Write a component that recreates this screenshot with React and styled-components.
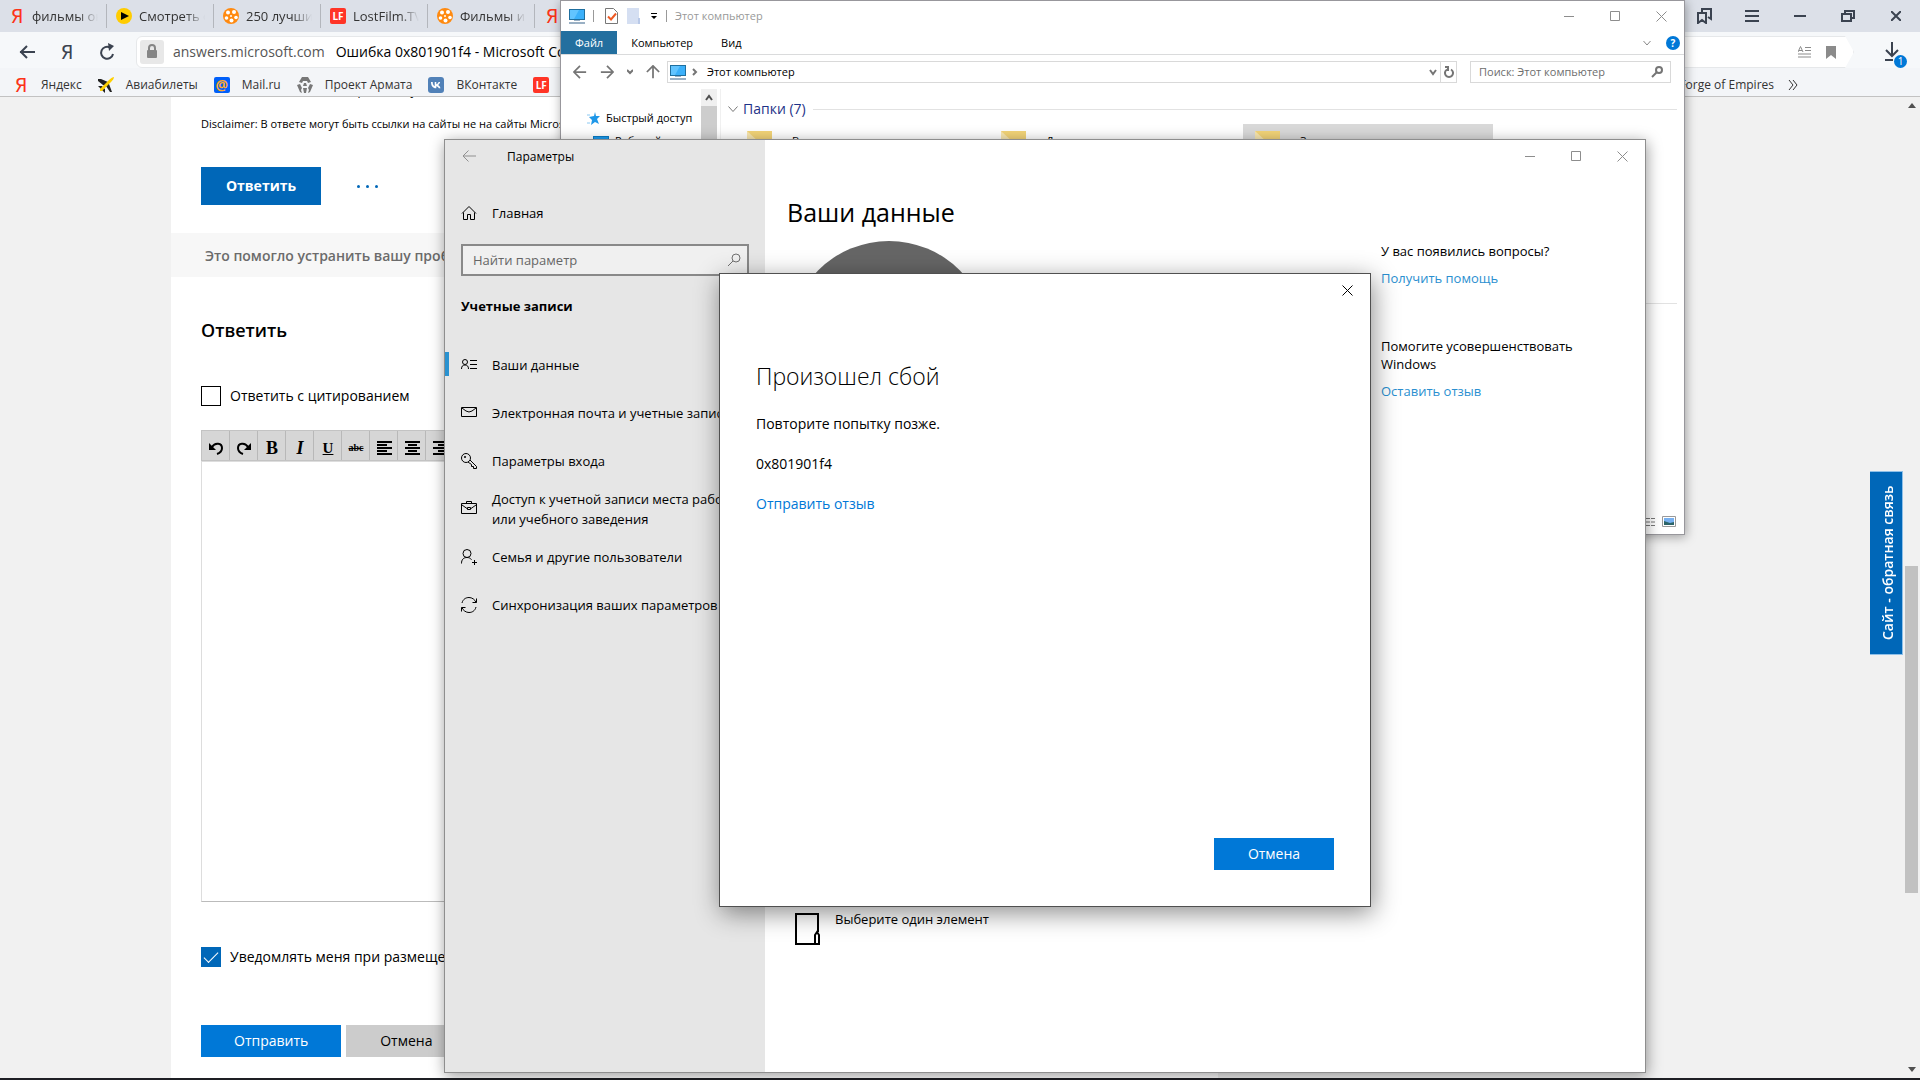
import React from "react";
import styled, { createGlobalStyle, css } from "styled-components";

const GlobalStyle = createGlobalStyle`
  * {
    box-sizing: border-box;
  }
  body {
    margin: 0;
    font-family: "Open Sans", "Noto Sans", sans-serif;
    font-size: 13px;
    line-height: 20px;
    color: #000;
  }
  button, input, textarea {
    font: inherit;
    color: inherit;
    margin: 0;
    padding: 0;
    border: 0;
    border-radius: 0;
    background: none;
    outline: 0;
  }
  p, h1, h2, ul {
    margin: 0;
    padding: 0;
    font-weight: 400;
  }
  a {
    color: inherit;
    text-decoration: none;
  }
  svg {
    display: block;
    flex: none;
  }
`;

const Svg = ({ w = 16, h = 16, children, ...rest }) => (
  <svg width={w} height={h} viewBox={`0 0 ${w} ${h}`} fill="none" stroke="currentColor" aria-hidden="true" {...rest}>
    {children}
  </svg>
);

/* ---------- icons ---------- */

const PlayIcon = () => (
  <Svg stroke="none">
    <circle cx="8" cy="8" r="8" fill="#ffcc00" />
    <path d="M5 4l8 4-8 4z" fill="#000" />
  </Svg>
);

const FilmIcon = () => (
  <Svg stroke="none">
    <circle cx="8" cy="8" r="8" fill="#ff8a10" />
    <g fill="#fff">
      <circle cx="5" cy="4.500" r="2" />
      <circle cx="11" cy="4" r="2" />
      <circle cx="13" cy="9.500" r="1.800" />
      <circle cx="8.500" cy="12.500" r="2" />
      <circle cx="3.500" cy="10" r="1.800" />
      <circle cx="8" cy="8" r="1" />
    </g>
  </Svg>
);

const PlaneIcon = () => (
  <Svg stroke="none">
    <path d="M0 2h3l7 3 1 2 3 8-2 0-4-6-3-1-5-4zM0 9l4 0 3 3 0 4-3-3z" fill="#222" />
    <path d="M16 0c-1 0-3 1-5 3L2 12l0 2 2 0 9-9c2-2 3-4 3-5z" fill="#ffd000" />
  </Svg>
);

const ArmataIcon = () => (
  <Svg stroke="none">
    <path d="M5 0h6l3 5-3 1-1-2H6L5 6 2 5zM0 8l3-1 2 4-1 2 1 3-2-1zM16 8l-3-1-2 4 1 2-1 3 2-1zM7 6h2l1 3H6zM6 11h4l-1 5H7z" fill="#777" />
  </Svg>
);

const VkIcon = () => (
  <Svg stroke="none">
    <rect width="16" height="16" rx="3" fill="#5181b8" />
    <path
      d="M8 11.3C4.800 11.300 3 8.800 3 5h1.700c0 2.500 1 3.800 2 4V5h1.600v2.300c1-.1 1.800-1 2.200-2.300h1.600c-.2 1.300-1.200 2.500-2 3 .8.400 1.900 1.500 2.400 3.300h-1.700c-.400-1.200-1.300-2-2.500-2.100v2.100z"
      fill="#fff"
    />
  </Svg>
);

const LockIcon = () => (
  <Svg w={12} h={16} stroke="none">
    <rect x="1" y="6" width="10" height="8" rx="1" fill="#858585" />
    <path d="M3 7V4a3 3 0 016 0v3" fill="none" stroke="#858585" strokeWidth="2" />
  </Svg>
);

const BackIcon = () => (
  <Svg strokeWidth="2">
    <path d="M16 8H1M8 2L2 8l6 6" />
  </Svg>
);

const ReloadIcon = () => (
  <Svg w={18} h={18} strokeWidth="2">
    <path d="M12 4.500A6 6 0 1015 11" />
    <path d="M10 0l6 3-5 5z" fill="currentColor" stroke="none" />
  </Svg>
);

const DownloadIcon = () => (
  <Svg w={18} h={20} strokeWidth="2">
    <path d="M9 0v13M3 8l6 6 6-6M2 18h8" />
  </Svg>
);

const ReaderIcon = () => (
  <Svg w={14} h={12}>
    <path d="M0 6L2.500 .5 5 6M1 4.500h3M7 1.500h6M7 4.500h6M0 8h13M0 11h13" />
  </Svg>
);

const RibbonIcon = () => (
  <Svg w={10} h={13} stroke="none">
    <path d="M0 0h10v13l-5-4-5 4z" fill="#8b8b8b" />
  </Svg>
);

const PcIcon = () => (
  <Svg stroke="none">
    <rect x="0" y="1" width="16" height="11" fill="#1f6f9f" />
    <rect x="1" y="2" width="14" height="9" fill="#3bb0fa" />
    <path d="M1 2h9L5 11H1z" fill="#62c4ff" />
    <path d="M5 12h6v1H5zM0 14h16v2H0z" fill="#9ab0c4" />
  </Svg>
);

const CheckDocIcon = () => (
  <Svg w={13} h={16}>
    <path d="M.5.5h8l4 4v11H.5z" stroke="#777" fill="#fff" />
    <path d="M3 8.500l3 3 5-6" stroke="#ee5a24" strokeWidth="2" />
  </Svg>
);

const BlueDocIcon = () => (
  <Svg w={13} h={16} stroke="none">
    <path d="M0 0h12v16H0z" fill="#d5dff2" />
    <path d="M11 10h2v6h-2z" fill="#b9c9e8" />
  </Svg>
);

const Chevron = ({ up }) => (
  <Svg w={8} h={8} strokeWidth="2">
    <path d={up ? "M1 6l3-4 3 4" : "M1 2l3 4 3-4"} />
  </Svg>
);

const SearchIcon = ({ size = 14 }) => (
  <svg width={size} height={size} viewBox="0 0 14 14" fill="none" stroke="currentColor" aria-hidden="true">
    <circle cx="9" cy="5" r="4" />
    <path d="M6 8l-5 5" />
  </svg>
);

const StarIcon = () => (
  <Svg w={13} h={13} stroke="none">
    <path d="M8 0l1 4 4 0-3 3 2 5-4-2-4 3 1-5-3-3 5-1z" fill="#1e97e8" />
    <path d="M0 3h3M0 11h3" stroke="#8ac8f2" />
  </Svg>
);

const FolderIcon = () => (
  <Svg w={25} h={22} stroke="none">
    <path d="M0 0h25v22H0z" fill="#f3d478" />
    <path d="M0 0l13 12v10H0z" fill="#f9e7b0" />
  </Svg>
);

const HomeIcon = () => (
  <Svg>
    <path d="M1 8.500L8 1.500l7 7M2.500 7.500v7h4v-5h3v5h4v-7" />
  </Svg>
);

const UserCardIcon = () => (
  <Svg>
    <circle cx="4" cy="5" r="2.500" />
    <path d="M.5 12C.5 9 2 8 4 8s3.500 1 3.500 4M9 3.500h7M9 7.500h7M9 11.500h7" />
  </Svg>
);

const MailIcon = () => (
  <Svg>
    <path d="M.5 2.500h15v9H.5zM1 3l4 3 3 1 3-1 4-3" />
  </Svg>
);

const KeyIcon = () => (
  <Svg>
    <circle cx="5" cy="5" r="4.500" />
    <circle cx="4" cy="4" r=".7" />
    <path d="M9 7l6.500 6.500v2h-3v-2h-2v-2L7 9" />
  </Svg>
);

const CaseIcon = () => (
  <Svg>
    <path d="M.5 2.500h15v10H.5zM5.500 2V.5h5V2M1 4l5 3.500M15 4l-5 3.500M6.500 6.500h3v2h-3z" />
  </Svg>
);

const AddUserIcon = () => (
  <Svg>
    <circle cx="6" cy="4.500" r="4" />
    <path d="M.5 14.500c0-4 2-6 5.500-6 2 0 3.500.8 4.500 2.200M11 13.500h5M13.500 11v5" />
  </Svg>
);

const SyncIcon = () => (
  <Svg>
    <path d="M1 6C2 2 5 .5 8 .5s6 2 7 5M15.500 1.500v4h-4M15 10c-1 4-4 5.500-7 5.500s-6-2-7-5M.5 14.500v-4h4" />
  </Svg>
);

const ThinArrow = ({ d = "M15 8H1M8 1L1 8l7 7", size = 14 }) => (
  <svg width={size} height={size} viewBox="0 0 16 16" fill="none" stroke="currentColor" strokeWidth="2" aria-hidden="true">
    <path d={d} />
  </svg>
);

const CloseX = ({ size = 11 }) => (
  <Svg w={size} h={size}>
    <path d={`M.5.5l${size - 1} ${size - 1}M${size - 0.5}.5l-${size - 1} ${size - 1}`} />
  </Svg>
);

/* ---------- desktop ---------- */

const Desktop = styled.div`
  position: relative;
  display: flex;
  flex-direction: column;
  height: 100vh;
  overflow: hidden;
  background: #1e1f24;
  padding-bottom: 2px;
`;

const Window = styled.section`
  position: absolute;
  display: flex;
  flex-direction: column;
  background: #fff;
`;

/* ---------- browser ---------- */

const Browser = styled.main`
  flex: 1;
  min-height: 0;
  display: flex;
  flex-direction: column;
`;

const TabStrip = styled.div`
  display: flex;
  align-items: center;
  height: 32px;
  background: #dce0e8;
  color: #333;
`;

const BrowserTab = styled.button`
  display: flex;
  align-items: center;
  gap: 7px;
  width: 107px;
  height: 24px;
  padding: 0 8px 0 9px;
  border-right: 1px solid #b3b6bc;
  flex: none;
  span:last-child {
    flex: 1;
    text-align: left;
    overflow: hidden;
    white-space: nowrap;
    mask-image: linear-gradient(90deg, #000 70%, transparent);
  }
`;

const YaLetter = styled.span`
  width: 16px;
  text-align: center;
  font-family: "Liberation Sans Narrow", "DejaVu Sans Condensed", sans-serif;
  font-size: 20px;
  line-height: 20px;
  color: ${(p) => p.$color || "#fc3318"};
`;

const SquareLogo = styled.span`
  width: 16px;
  height: 16px;
  line-height: 16px;
  border-radius: 2px;
  text-align: center;
  font-size: ${(p) => p.$size || 10}px;
  font-weight: 700;
  flex: none;
  color: ${(p) => p.$color || "#fff"};
  background: ${(p) => p.$bg};
`;

const ChromeButtons = styled.div`
  display: flex;
  margin-left: auto;
  color: #3b4350;
`;

const ChromeButton = styled.button`
  display: grid;
  place-items: center;
  width: ${(p) => p.$w || 48}px;
  height: 32px;
`;

const Toolbar = styled.div`
  display: flex;
  align-items: center;
  height: 36px;
  padding: 4px 8px 0 7px;
  background: #f6f8fa;
  color: #3b4350;
`;

const AddressShell = styled.div`
  flex: 1;
  display: flex;
  align-items: center;
  height: 32px;
  margin: 0 18px 0 9px;
  padding: 0 17px 0 3px;
  background: #fff;
  border: 1px solid #e6e8ea;
  border-radius: 6px 0 0 6px;
  clip-path: polygon(0 0, calc(100% - 9px) 0, 100% 50%, calc(100% - 9px) 100%, 0 100%);
`;

const LockButton = styled.button`
  display: grid;
  place-items: center;
  width: 24px;
  height: 24px;
  border-radius: 3px;
  background: #e8e8e8;
`;

const Address = styled.button`
  display: flex;
  flex: 1;
  gap: 11px;
  padding-left: 9px;
  font-size: 14px;
  color: #000;
  white-space: nowrap;
  span:first-child {
    color: #555;
  }
`;

const AddressTools = styled.div`
  display: flex;
  align-items: center;
  gap: 14px;
  color: #8b8b8b;
`;

const Download = styled.button`
  position: relative;
  width: 40px;
  padding-left: 11px;
`;

const DownloadBadge = styled.span`
  position: absolute;
  left: 22px;
  top: 13px;
  width: 13px;
  height: 13px;
  border-radius: 50%;
  background: #0078d7;
  color: #fff;
  font-size: 10px;
  line-height: 13px;
  text-align: center;
`;

const Bookmarks = styled.nav`
  display: flex;
  align-items: center;
  height: 29px;
  padding: 5px 122px 0 13px;
  background: #f3f5f8;
  border-bottom: 1px solid #c2c2c2;
  color: #333;
  font-size: 12px;
`;

const Bookmark = styled.a`
  display: flex;
  align-items: center;
  gap: 12px;
  margin-right: 16px;
  white-space: nowrap;
`;

const BookmarksEnd = styled.div`
  display: flex;
  gap: 14px;
  margin-left: auto;
`;

const Viewport = styled.div`
  position: relative;
  flex: 1;
  min-height: 0;
  display: flex;
  overflow: hidden;
  background: #f1f1f1;
`;

const Article = styled.article`
  width: 1047px;
  margin-left: 171px;
  background: #fff;
`;

const Inset = styled.div`
  display: flex;
  align-items: center;
  gap: ${(p) => p.$gap || 0}px;
  margin: ${(p) => p.$top}px 30px 0;
`;

const ClippedLine = styled.p`
  margin: -16px 30px 0;
  font-size: 12px;
`;

const SmallPrint = styled.p`
  font-size: 11px;
  white-space: nowrap;
`;

const WebButton = styled.button`
  height: ${(p) => p.$h || 32}px;
  padding: 0 ${(p) => p.$pad || 33}px;
  min-width: 120px;
  font-size: 14px;
  font-weight: ${(p) => (p.$bold ? 700 : 400)};
  color: ${(p) => p.$color || "#fff"};
  background: ${(p) => p.$bg || "#0078d7"};
`;

const Dots = styled.button`
  display: flex;
  gap: 6px;
  i {
    width: 3px;
    height: 3px;
    border-radius: 50%;
    background: #0067b8;
  }
`;

const HelpStrip = styled.p`
  margin-top: 28px;
  padding: 0 34px;
  line-height: 46px;
  height: 44px;
  background: #f7f7f7;
  color: #6b6b6b;
  font-size: 14px;
  font-weight: 600;
`;

const ReplyTitle = styled.h2`
  font-size: 18px;
  line-height: 28px;
  font-weight: 600;
`;

const CheckLabel = styled.label`
  display: flex;
  align-items: center;
  gap: 9px;
  font-size: 14px;
  white-space: nowrap;
`;

const CheckBox = styled.input`
  appearance: none;
  display: grid;
  place-items: center;
  width: 20px;
  height: 20px;
  border: 1px solid #000;
  &:checked {
    background: #0067b8;
    border-color: #0067b8;
  }
  &:checked::after {
    content: "";
    width: 13px;
    height: 6px;
    border-left: 1px solid #fff;
    border-bottom: 1px solid #fff;
    transform: translateY(-2px) rotate(-45deg);
  }
`;

const Editor = styled.div`
  margin: 24px 30px 0;
`;

const EditorBar = styled.div`
  display: flex;
  height: 31px;
  border: 1px solid #c3c3c3;
  background: #d6d6d6;
`;

const EditorButton = styled.button`
  display: grid;
  place-items: center;
  width: 28px;
  padding: 4px 0 0 1px;
  border-right: 1px solid #b8b8b8;
  font-family: "Liberation Serif", serif;
  font-size: ${(p) => p.$size || 18}px;
  font-weight: ${(p) => (p.$light ? 400 : 700)};
  font-style: ${(p) => (p.$italic ? "italic" : "normal")};
  text-decoration: ${(p) => p.$line || "none"};
`;

const EditorArea = styled.textarea`
  display: block;
  width: 100%;
  height: 441px;
  resize: none;
  border: 1px solid #ddd;
  border-bottom-color: #bbb;
`;

const Feedback = styled.button`
  position: absolute;
  right: 17px;
  top: 374px;
  width: 33px;
  height: 184px;
  padding-right: 4px;
  border: 1px solid #8fc0e8;
  border-right: 0;
  background: #0067b8;
  color: #fff;
  font-size: 14px;
  font-weight: 600;
  writing-mode: vertical-rl;
  transform: rotate(180deg);
  transform-origin: center;
  display: flex;
  align-items: center;
  justify-content: center;
`;

const ScrollTrack = styled.div`
  display: flex;
  flex-direction: column;
  align-items: center;
  width: 17px;
  margin-left: auto;
  padding: 6px 0;
  background: #f1f1f1;
`;

const ScrollSpace = styled.div`
  flex: ${(p) => p.$part};
`;

const ScrollThumb = styled.div`
  flex: 327;
  width: 13px;
  background: #c1c1c1;
`;

/* ---------- explorer ---------- */

const Explorer = styled(Window)`
  left: 560px;
  top: 0;
  width: 1125px;
  height: 535px;
  border: 1px solid #98979c;
  box-shadow: 1px 2px 10px rgba(0, 0, 0, 0.35);
  font-size: 11px;
`;

const ExplorerTitle = styled.div`
  display: flex;
  align-items: center;
  height: 30px;
  padding-left: 8px;
  gap: 8px;
  color: #999;
`;

const DocIcons = styled.div`
  display: flex;
  gap: 9px;
  margin: 0 2px 0 3px;
  align-items: center;
`;

const ThinRule = styled.i`
  width: 1px;
  height: 12px;
  background: #999;
`;

const WindowButtons = styled.div`
  display: flex;
  margin-left: auto;
  color: #8d8d8d;
`;

const WindowButton = styled.button`
  display: grid;
  place-items: center;
  width: 46px;
  height: 30px;
`;

const Ribbon = styled.div`
  display: flex;
  align-items: center;
  height: 24px;
  border-bottom: 1px solid #dadbdc;
`;

const RibbonTab = styled.button`
  height: 23px;
  padding: 0 14px;
  ${(p) =>
    p.$active &&
    css`
      background: #236f9f;
      color: #fff;
    `}
`;

const HelpDot = styled.button`
  width: 14px;
  height: 14px;
  margin: 0 4px 0 15px;
  border-radius: 50%;
  background: #0078d7;
  color: #fff;
  font-size: 10px;
  line-height: 14px;
  font-weight: 700;
`;

const RibbonEnd = styled.div`
  display: flex;
  align-items: center;
  margin-left: auto;
  color: #888;
`;

const NavRow = styled.div`
  display: flex;
  align-items: center;
  padding: 6px 13px 6px 12px;
  color: #757575;
`;

const NavArrows = styled.div`
  display: flex;
  align-items: center;
  gap: 13px;
  width: 94px;
`;

const PathBox = styled.div`
  flex: 1;
  display: flex;
  align-items: center;
  height: 22px;
  padding-left: 2px;
  border: 1px solid #d9d9d9;
`;

const Crumb = styled.button`
  display: flex;
  align-items: center;
  gap: 6px;
  flex: 1;
  span {
    color: #000;
    margin-left: 3px;
  }
`;

const RefreshButton = styled.button`
  display: grid;
  place-items: center;
  width: 16px;
  height: 20px;
  margin-left: 3px;
  border-left: 1px solid #d9d9d9;
`;

const ExplorerSearch = styled.label`
  display: flex;
  align-items: center;
  width: 201px;
  height: 22px;
  margin-left: 13px;
  padding: 0 7px 0 8px;
  border: 1px solid #d9d9d9;
  input {
    flex: 1;
    min-width: 0;
  }
  input::placeholder {
    color: #6d6d6d;
    opacity: 1;
  }
`;

const ExplorerBody = styled.div`
  flex: 1;
  display: flex;
  min-height: 0;
`;

const Tree = styled.div`
  display: flex;
  flex-direction: column;
  gap: 3px;
  width: 140px;
  padding: 19px 0 0 26px;
`;

const TreeItem = styled.a`
  display: flex;
  align-items: center;
  gap: 6px;
  margin-left: ${(p) => p.$indent || 0}px;
  white-space: nowrap;
`;

const TreeScroll = styled.div`
  display: flex;
  flex-direction: column;
  align-items: center;
  width: 16px;
  padding-top: 5px;
  background: #f0f0f0;
  color: #505050;
  &::after {
    content: "";
    width: 16px;
    flex: 1;
    margin-top: 4px;
    background: #cdcdcd;
  }
`;

const FolderPane = styled.div`
  flex: 1;
  display: flex;
  flex-direction: column;
  margin-left: 3px;
  padding: 10px 7px 0;
  border-left: 1px solid #f0f0f0;
`;

const GroupTitle = styled.button`
  display: flex;
  align-items: center;
  gap: 5px;
  color: #1e3287;
  font-size: 14px;
  &::after {
    content: "";
    flex: 1;
    height: 1px;
    margin-left: 2px;
    background: #e2e2e2;
  }
`;

const Tiles = styled.div`
  display: flex;
  gap: 4px;
  margin: 5px 0 125px 7px;
`;

const Tile = styled.a`
  display: flex;
  gap: 20px;
  width: 250px;
  height: 54px;
  padding: 7px 12px;
  background: ${(p) => (p.$selected ? "#d9d9d9" : "none")};
`;

const StatusBar = styled.div`
  display: flex;
  align-items: center;
  justify-content: flex-end;
  gap: 7px;
  height: 25px;
  padding-right: 8px;
`;

/* ---------- settings ---------- */

const Settings = styled(Window)`
  left: 444px;
  top: 139px;
  width: 1202px;
  height: 934px;
  flex-direction: row;
  border: 1px solid #8e8e8e;
  box-shadow: 1px 3px 14px rgba(0, 0, 0, 0.4);
`;

const SideBar = styled.aside`
  display: flex;
  flex-direction: column;
  width: 320px;
  background: #e6e6e6;
`;

const SideTitle = styled.div`
  display: flex;
  align-items: center;
  gap: 31px;
  height: 34px;
  padding-left: 17px;
  font-size: 12px;
  button {
    color: #909090;
  }
`;

const SideLink = styled.a`
  display: flex;
  align-items: center;
  gap: 15px;
  height: 48px;
  padding-left: 16px;
  background: ${(p) => (p.$active ? "linear-gradient(#2a92d0, #2a92d0) 0 11px / 4px 24px no-repeat" : "none")};
  white-space: pre;
`;

const HomeLink = styled(SideLink)`
  margin-top: 15px;
`;

const SideSearch = styled.label`
  display: flex;
  align-items: center;
  height: 32px;
  margin: 7px 16px 0;
  padding: 0 6px 0 10px;
  border: 2px solid #898989;
  background: #f0f0f0;
  color: #707070;
  input {
    flex: 1;
    min-width: 0;
  }
  input::placeholder {
    color: #666;
    opacity: 1;
  }
`;

const SideHeading = styled.h2`
  margin: 20px 16px 25px;
  font-size: 13px;
  font-weight: 700;
`;

const SettingsMain = styled.div`
  flex: 1;
  display: flex;
  flex-direction: column;
  padding-top: 1px;
`;

const SettingsColumns = styled.div`
  flex: 1;
  display: flex;
  justify-content: space-between;
  padding: 23px 40px 0 22px;
`;

const AccountColumn = styled.div`
  display: flex;
  flex-direction: column;
`;

const PageTitle = styled.h1`
  font-size: 25px;
  line-height: 36px;
  font-weight: 400;
`;

const Avatar = styled.div`
  width: 200px;
  height: 200px;
  margin: 11px 0 470px 2px;
  border-radius: 50%;
  background: #666;
`;

const PickRow = styled.div`
  display: flex;
  gap: 14px;
  padding-left: 8px;
  svg {
    margin-top: 2px;
  }
  span {
    margin-top: -2px;
  }
`;

const HelpColumn = styled.div`
  display: flex;
  flex-direction: column;
  width: 224px;
  padding-top: 48px;
  line-height: 18px;
`;

const HelpLink = styled.a`
  margin: 9px 0 50px;
  color: #2a8fd0;
`;

/* ---------- error dialog ---------- */

const Dialog = styled(Window)`
  left: 719px;
  top: 273px;
  width: 652px;
  height: 634px;
  border: 1px solid #505050;
  box-shadow: 2px 6px 24px rgba(0, 0, 0, 0.45);
  padding: 0 36px 36px;
  font-size: 14px;
`;

const DialogClose = styled.button`
  align-self: flex-end;
  display: grid;
  place-items: center;
  width: 46px;
  height: 32px;
  margin-right: -36px;
`;

const DialogTitle = styled.h1`
  margin: 54px 0 22px;
  font-size: 23px;
  line-height: 32px;
  font-weight: 300;
`;

const DialogText = styled.p`
  margin-bottom: 20px;
`;

const DialogLink = styled.a`
  align-self: flex-start;
  color: #0078d7;
`;

const DialogActions = styled.div`
  display: flex;
  justify-content: flex-end;
  margin-top: auto;
`;

const browserTabs = [
  { icon: <YaLetter>Я</YaLetter>, text: "фильмы онлайн" },
  { icon: <PlayIcon />, text: "Смотреть фильмы" },
  { icon: <FilmIcon />, text: "250 лучших фильмов" },
  { icon: <SquareLogo $bg="#ff3426">LF</SquareLogo>, text: "LostFilm.TV" },
  { icon: <FilmIcon />, text: "Фильмы и сериалы" },
  { icon: <YaLetter>Я</YaLetter>, text: "" },
];

const bookmarks = [
  { icon: <YaLetter>Я</YaLetter>, text: "Яндекс" },
  { icon: <PlaneIcon />, text: "Авиабилеты" },
  { icon: <SquareLogo $bg="#005ff9" $color="#ffa930" $size={14}>@</SquareLogo>, text: "Mail.ru" },
  { icon: <ArmataIcon />, text: "Проект Армата" },
  { icon: <VkIcon />, text: "ВКонтакте" },
  { icon: <SquareLogo $bg="#ff3426">LF</SquareLogo>, text: "" },
];

const settingsLinks = [
  { icon: <UserCardIcon />, text: "Ваши данные", active: true },
  { icon: <MailIcon />, text: "Электронная почта и учетные записи" },
  { icon: <KeyIcon />, text: "Параметры входа" },
  { icon: <CaseIcon />, text: "Доступ к учетной записи места работы\nили учебного заведения" },
  { icon: <AddUserIcon />, text: "Семья и другие пользователи" },
  { icon: <SyncIcon />, text: "Синхронизация ваших параметров" },
];

const align = [
  { name: "По левому краю", d: "M0 1h15M0 4h10M0 7h15M0 10h10M0 13h15" },
  { name: "По центру", d: "M0 1h15M3 4h9M0 7h15M3 10h9M0 13h15" },
  { name: "По правому краю", d: "M0 1h15M5 4h10M0 7h15M5 10h10M0 13h15" },
];

const WinControls = () => (
  <WindowButtons>
    <WindowButton aria-label="Свернуть">
      <Svg w={10} h={10}><path d="M0 5.500h10" /></Svg>
    </WindowButton>
    <WindowButton aria-label="Развернуть">
      <Svg w={10} h={10}><path d="M.5.5h9v9h-9z" /></Svg>
    </WindowButton>
    <WindowButton aria-label="Закрыть"><CloseX /></WindowButton>
  </WindowButtons>
);

const BrowserWindow = () => (
  <Browser>
    <TabStrip>
      {browserTabs.map((tab, i) => (
        <BrowserTab key={i}>
          {tab.icon}
          <span>{tab.text}</span>
        </BrowserTab>
      ))}
      <ChromeButtons>
        <ChromeButton aria-label="Коллекции">
          <Svg strokeWidth="2"><path d="M6 4V1h9v10l-3-2M2 5h8v10l-4-3-4 3z" /></Svg>
        </ChromeButton>
        <ChromeButton aria-label="Меню">
          <Svg w={14} h={12} strokeWidth="2"><path d="M0 1h14M0 6h14M0 11h14" /></Svg>
        </ChromeButton>
        <ChromeButton aria-label="Свернуть">
          <Svg w={12} h={12} strokeWidth="2"><path d="M0 6h12" /></Svg>
        </ChromeButton>
        <ChromeButton aria-label="Восстановить">
          <Svg w={14} h={12} strokeWidth="2"><path d="M1 4h9v7H1zM4 4V1h9v7h-3" /></Svg>
        </ChromeButton>
        <ChromeButton aria-label="Закрыть">
          <Svg w={10} h={10} strokeWidth="2"><path d="M0 0l10 10M10 0L0 10" /></Svg>
        </ChromeButton>
      </ChromeButtons>
    </TabStrip>
    <Toolbar>
      <ChromeButton $w={40} aria-label="Назад"><BackIcon /></ChromeButton>
      <ChromeButton $w={40} aria-label="Яндекс"><YaLetter $color="#3b4350">Я</YaLetter></ChromeButton>
      <ChromeButton $w={40} aria-label="Обновить"><ReloadIcon /></ChromeButton>
      <AddressShell>
        <LockButton aria-label="Защита"><LockIcon /></LockButton>
        <Address>
          <span>answers.microsoft.com</span>
          <span>Ошибка 0x801901f4 - Microsoft Community</span>
        </Address>
        <AddressTools><ReaderIcon /><RibbonIcon /></AddressTools>
      </AddressShell>
      <Download aria-label="Загрузки">
        <DownloadIcon />
        <DownloadBadge>1</DownloadBadge>
      </Download>
    </Toolbar>
    <Bookmarks>
      {bookmarks.map((b, i) => (
        <Bookmark href="#" key={i}>{b.icon}{b.text}</Bookmark>
      ))}
      <BookmarksEnd>
        <a href="#">Forge of Empires</a>
        <Svg w={10} h={20}><path d="M1 5l4 5-4 5M5 5l4 5-4 5" /></Svg>
      </BookmarksEnd>
    </Bookmarks>
    <Viewport>
      <Article>
        <ClippedLine>Если мой ответ вам помог решать суть, отметьте</ClippedLine>
        <Inset $top={13}>
          <SmallPrint>Disclaimer: В ответе могут быть ссылки на сайты не на сайты Microsoft</SmallPrint>
        </Inset>
        <Inset $top={33} $gap={36}>
          <WebButton $h={38} $pad={20} $bold $bg="#0067b8">Ответить</WebButton>
          <Dots aria-label="Ещё"><i /><i /><i /></Dots>
        </Inset>
        <HelpStrip>Это помогло устранить вашу проблему?</HelpStrip>
        <Inset $top={39}><ReplyTitle>Ответить</ReplyTitle></Inset>
        <Inset $top={42}>
          <CheckLabel><CheckBox type="checkbox" />Ответить с цитированием</CheckLabel>
        </Inset>
        <Editor>
          <EditorBar>
            <EditorButton aria-label="Отменить">
              <Svg w={14} h={14} strokeWidth="2">
                <path d="M3 6c3-5 10-4 10 1 0 3-2 5-5 6" />
                <path d="M0 2v7h7z" fill="currentColor" stroke="none" />
              </Svg>
            </EditorButton>
            <EditorButton aria-label="Повторить">
              <Svg w={14} h={14} strokeWidth="2">
                <path d="M11 6C8 1 1 2 1 7c0 3 2 5 5 6" />
                <path d="M14 2v7H7z" fill="currentColor" stroke="none" />
              </Svg>
            </EditorButton>
            <EditorButton>B</EditorButton>
            <EditorButton $italic>I</EditorButton>
            <EditorButton $line="underline" $size={15}>U</EditorButton>
            <EditorButton $line="line-through" $size={10}>abc</EditorButton>
            {align.map((a) => (
              <EditorButton key={a.name} aria-label={a.name}>
                <Svg w={15} h={14} strokeWidth="2"><path d={a.d} /></Svg>
              </EditorButton>
            ))}
          </EditorBar>
          <EditorArea aria-label="Текст ответа" />
        </Editor>
        <Inset $top={45}>
          <CheckLabel><CheckBox type="checkbox" defaultChecked />Уведомлять меня при размещении ответа</CheckLabel>
        </Inset>
        <Inset $top={58} $gap={5}>
          <WebButton>Отправить</WebButton>
          <WebButton $bg="#ccc" $color="#000">Отмена</WebButton>
        </Inset>
      </Article>
      <Feedback>Сайт - обратная связь</Feedback>
      <ScrollTrack>
        <Svg w={8} h={5} stroke="none"><path d="M0 5l4-5 4 5z" fill="#505050" /></Svg>
        <ScrollSpace $part={458} />
        <ScrollThumb />
        <ScrollSpace $part={174} />
        <Svg w={8} h={5} stroke="none"><path d="M0 0l4 5 4-5z" fill="#505050" /></Svg>
      </ScrollTrack>
    </Viewport>
  </Browser>
);

const ExplorerWindow = () => (
  <Explorer>
    <ExplorerTitle>
      <PcIcon />
      <ThinRule />
      <DocIcons><CheckDocIcon /><BlueDocIcon /></DocIcons>
      <Svg w={8} h={8} stroke="none"><path d="M1 1h6v1H1zM1 4h6L4 7z" fill="#000" /></Svg>
      <ThinRule />
      <span>Этот компьютер</span>
      <WinControls />
    </ExplorerTitle>
    <Ribbon>
      <RibbonTab $active>Файл</RibbonTab>
      <RibbonTab>Компьютер</RibbonTab>
      <RibbonTab>Вид</RibbonTab>
      <RibbonEnd>
        <Svg w={8} h={8}><path d="M.5 2L4 6l3.500-4" /></Svg>
        <HelpDot>?</HelpDot>
      </RibbonEnd>
    </Ribbon>
    <NavRow>
      <NavArrows>
        <ThinArrow />
        <ThinArrow d="M1 8h14M8 1l7 7-7 7" />
        <Svg w={6} h={6} strokeWidth="2"><path d="M0 1l3 3 3-3" /></Svg>
        <ThinArrow d="M8 15V1M1 8l7-7 7 7" />
      </NavArrows>
      <PathBox>
        <Crumb>
          <PcIcon />
          <Svg w={6} h={8} strokeWidth="2"><path d="M1 1l3 3-3 3" /></Svg>
          <span>Этот компьютер</span>
        </Crumb>
        <Chevron />
        <RefreshButton aria-label="Обновить">
          <Svg w={10} h={12} strokeWidth="2"><path d="M7 3.500A4 4 0 113 3.500M1 1h3v4" /></Svg>
        </RefreshButton>
      </PathBox>
      <ExplorerSearch>
        <input aria-label="Поиск" placeholder="Поиск: Этот компьютер" />
        <Svg w={12} h={12} strokeWidth="2"><circle cx="8" cy="4" r="3" /><path d="M6 6l-5 5" /></Svg>
      </ExplorerSearch>
    </NavRow>
    <ExplorerBody>
      <Tree>
        <TreeItem href="#"><StarIcon />Быстрый доступ</TreeItem>
        <TreeItem href="#" $indent={6}>
          <Svg stroke="none"><path d="M0 3h16v11H0z" fill="#0c7cc4" /><path d="M1 4h14v8H1z" fill="#1b9cf0" /></Svg>
          Рабочий стол
        </TreeItem>
      </Tree>
      <TreeScroll><Chevron up /></TreeScroll>
      <FolderPane>
        <GroupTitle>
          <Svg w={10} h={8} stroke="#777"><path d="M.5 1.500L5 6.500l4.500-5" /></Svg>
          Папки (7)
        </GroupTitle>
        <Tiles>
          <Tile href="#"><FolderIcon />Видео</Tile>
          <Tile href="#"><FolderIcon />Документы</Tile>
          <Tile href="#" $selected><FolderIcon />Загрузки</Tile>
        </Tiles>
        <GroupTitle aria-label="Устройства и диски" />
      </FolderPane>
    </ExplorerBody>
    <StatusBar>
      <Svg w={14} h={10} stroke="#777"><path d="M0 1.500h4M5 1.500h4M10 1.500h4M0 5h4M5 5h4M10 5h4M0 8.500h4M5 8.500h4M10 8.500h4" /></Svg>
      <Svg w={14} h={11}>
        <path d="M.5.5h13v10H.5z" stroke="#999" fill="#fff" />
        <path d="M2 2h10v7H2z" fill="#77b0f0" stroke="none" />
        <path d="M2 5l6 2 4-1v3H2z" fill="#2c6468" stroke="none" />
      </Svg>
    </StatusBar>
  </Explorer>
);

const SettingsWindow = () => (
  <Settings>
    <SideBar>
      <SideTitle>
        <button aria-label="Назад"><Svg w={14} h={14}><path d="M14 6H1M6.500.5L1 6l5.500 5.500" /></Svg></button>
        Параметры
      </SideTitle>
      <HomeLink href="#"><HomeIcon />Главная</HomeLink>
      <SideSearch>
        <input aria-label="Найти параметр" placeholder="Найти параметр" />
        <SearchIcon />
      </SideSearch>
      <SideHeading>Учетные записи</SideHeading>
      {settingsLinks.map((l) => (
        <SideLink href="#" key={l.text} $active={l.active}>{l.icon}<span>{l.text}</span></SideLink>
      ))}
    </SideBar>
    <SettingsMain>
      <WinControls />
      <SettingsColumns>
        <AccountColumn>
          <PageTitle>Ваши данные</PageTitle>
          <Avatar />
          <PickRow>
            <Svg w={26} h={32} strokeWidth="2">
              <path d="M20 31H1V1h22v18" />
              <path d="M20 31V22l2-3 2 3v9z" />
            </Svg>
            <span>Выберите один элемент</span>
          </PickRow>
        </AccountColumn>
        <HelpColumn>
          <p>У вас появились вопросы?</p>
          <HelpLink href="#">Получить помощь</HelpLink>
          <p>Помогите усовершенствовать Windows</p>
          <HelpLink href="#">Оставить отзыв</HelpLink>
        </HelpColumn>
      </SettingsColumns>
    </SettingsMain>
  </Settings>
);

const ErrorDialog = () => (
  <Dialog role="dialog" aria-labelledby="error-title">
    <DialogClose aria-label="Закрыть"><CloseX /></DialogClose>
    <DialogTitle id="error-title">Произошел сбой</DialogTitle>
    <DialogText>Повторите попытку позже.</DialogText>
    <DialogText>0x801901f4</DialogText>
    <DialogLink href="#">Отправить отзыв</DialogLink>
    <DialogActions><WebButton>Отмена</WebButton></DialogActions>
  </Dialog>
);

const App = () => (
  <Desktop>
    <GlobalStyle />
    <BrowserWindow />
    <ExplorerWindow />
    <SettingsWindow />
    <ErrorDialog />
  </Desktop>
);

export default App;
